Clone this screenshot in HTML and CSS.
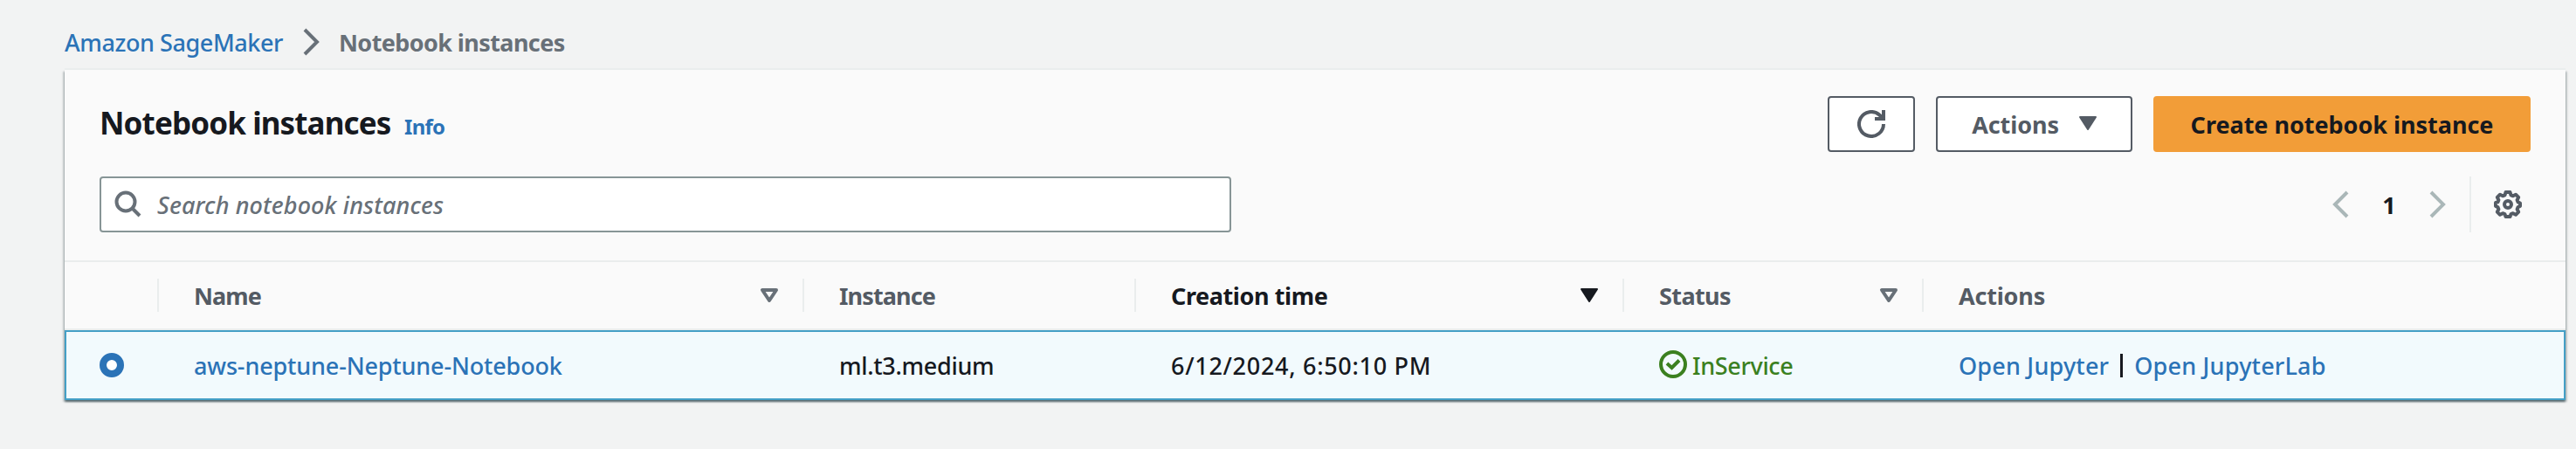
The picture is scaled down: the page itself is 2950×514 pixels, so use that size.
FILE: index.html
```html
<!DOCTYPE html>
<html lang="en">
<head>
<meta charset="utf-8">
<title>Notebook instances</title>
<link rel="stylesheet" href="styles.css">
</head>
<body>
<nav class="breadcrumb">
  <a class="link crumb-root">Amazon SageMaker</a>
  <svg class="crumb-sep" width="20" height="32" viewBox="0 0 20 32"><path d="M2 2l14 14L2 30" fill="none" stroke="#687078" stroke-width="4"/></svg>
  <span class="crumb-current">Notebook instances</span>
</nav>
<main class="card">
  <header class="title-row">
    <h1 class="title">Notebook instances</h1>
    <a class="info">Info</a>
    <div class="buttons">
      <button class="btn refresh" aria-label="Refresh"><svg width="32" height="32" viewBox="0 0 32 32" fill="none" stroke="#545b64" stroke-width="4"><path d="M30 16a14 14 0 1 1-4.500-10.300L29 9"/><path d="M30 0v10H20" /></svg></button>
      <button class="btn actions"><span>Actions</span><svg width="22" height="17" viewBox="0 0 22 17"><path d="M2 1h18L11 15z" fill="#545b64" stroke="#545b64" stroke-width="2" stroke-linejoin="round"/></svg></button>
      <button class="btn primary"><span>Create notebook instance</span></button>
    </div>
  </header>
  <div class="tools">
    <div class="search">
      <svg width="32" height="32" viewBox="0 0 32 32" fill="none" stroke="#687078" stroke-width="4"><circle cx="13" cy="13" r="10.500"/><path d="M20.500 20.500l8.500 8.500"/></svg>
      <span class="placeholder">Search notebook instances</span>
    </div>
    <div class="pager">
      <svg width="20" height="32" viewBox="0 0 20 32"><path d="M18 2L4 16l14 14" fill="none" stroke="#aab7b8" stroke-width="4"/></svg>
      <b class="page">1</b>
      <svg width="20" height="32" viewBox="0 0 20 32"><path d="M2 2l14 14L2 30" fill="none" stroke="#aab7b8" stroke-width="4"/></svg>
      <div class="settings">
        <svg width="32" height="32" viewBox="0 0 32 32" fill="none" stroke="#545b64" stroke-width="4" stroke-linejoin="round"><path d="M13.500 2h5l1 3.300 2.400 1 3.100-1.600 3.200 3.200-1.600 3.100 1 2.400 2.400 1.100v3.500l-2.400 1.100-1 2.400 1.600 3.100-3.200 3.200-3.100-1.600-2.400 1-1 2.800h-5l-1-2.800-2.400-1-3.100 1.600-3.200-3.200 1.600-3.100-1-2.400L2 18v-4l2.400-.6 1-2.400-1.600-3.100L7 4.700l3.100 1.600 2.400-1z"/><circle cx="16" cy="16" r="4"/></svg>
      </div>
    </div>
  </div>
  <div class="grid head">
    <div class="cell"></div>
    <div class="cell"><span class="h-name">Name</span><svg width="22" height="18" viewBox="0 0 22 18"><path d="M3 3h16L11 15z" fill="none" stroke="#687078" stroke-width="4" stroke-linejoin="round"/></svg></div>
    <div class="cell"><span class="h-instance">Instance</span></div>
    <div class="cell sorted"><span class="h-time">Creation time</span><svg width="22" height="18" viewBox="0 0 22 18"><path d="M2 2h18L11 16z" fill="#16191f" stroke="#16191f" stroke-width="2" stroke-linejoin="round"/></svg></div>
    <div class="cell"><span class="h-status">Status</span><svg width="22" height="18" viewBox="0 0 22 18"><path d="M3 3h16L11 15z" fill="none" stroke="#687078" stroke-width="4" stroke-linejoin="round"/></svg></div>
    <div class="cell"><span class="h-actions">Actions</span></div>
  </div>
  <div class="grid row">
    <div class="cell"><span class="radio"></span></div>
    <div class="cell text"><a class="link c-name">aws-neptune-Neptune-Notebook</a></div>
    <div class="cell text"><span class="c-type">ml.t3.medium</span></div>
    <div class="cell text"><span class="c-time">6/12/2024, 6:50:10 PM</span></div>
    <div class="cell text status"><svg width="32" height="32" viewBox="0 0 32 32" fill="none" stroke="#3b801f" stroke-width="4"><circle cx="16" cy="16" r="14"/><path d="M9 15l5.500 5L23 11.500"/></svg><span class="c-status">InService</span></div>
    <div class="cell text open"><a class="link c-open">Open Jupyter</a><i class="bar"></i><a class="link c-open">Open JupyterLab</a></div>
  </div>
</main>
</body>
</html>
```
FILE: styles.css
```css
* { box-sizing: border-box; }
body {
  margin: 0;
  height: 514px;
  background: #f2f3f3;
  color: #16191f;
  font: 500 27px/40px "Noto Sans", "Open Sans", sans-serif;
  white-space: nowrap;
  overflow: hidden;
}
svg { display: block; flex: none; }
.link, .info { color: #2b73b7; }

.breadcrumb { display: flex; align-items: center; height: 78px; padding: 20px 0 0 74px; }
.crumb-root { width: 251px; letter-spacing: -.42px; }
.crumb-sep { margin: -3px 21px 0 22px; }
.crumb-current { color: #687078; font-weight: 700; letter-spacing: -.6px; }

.card {
  width: 2864px;
  height: 378px;
  margin: 2px 0 0 74px;
  background: #fafafa;
  box-shadow: 0 -2px 0 #eaeded, 0 2px 2px rgba(0,28,36,.5), 2px 2px 2px rgba(0,28,36,.15), -2px 2px 2px rgba(0,28,36,.15);
}
.title-row { display: flex; align-items: center; height: 122px; padding: 30px 40px 28px; }
.title { margin: -2px 0 0; font-size: 35px; line-height: 48px; font-weight: 700; letter-spacing: -.88px; width: 333px; }
.info { margin: 5px 0 0 16px; font-size: 24px; font-weight: 700; letter-spacing: -.7px; }
.buttons { display: flex; gap: 24px; margin-left: auto; }
.btn {
  display: flex; align-items: center; justify-content: center;
  height: 64px; padding: 0; border: 2px solid #545b64; border-radius: 4px;
  background: #fff; color: #545b64;
  font: 700 27px/40px "Noto Sans", "Open Sans", sans-serif;
}
.btn span { padding-top: 1px; }
.refresh { width: 100px; }
.actions { width: 225px; gap: 22px; padding-left: 1px; letter-spacing: -.1px; }
.actions svg { margin-top: -2px; }
.primary { width: 432px; border-color: #f29d38; background: #f29d38; color: #16191f; letter-spacing: -.03px; }

.tools { display: flex; justify-content: space-between; height: 96px; padding: 0 40px; }
.search { display: flex; align-items: center; gap: 17px; width: 1296px; height: 64px; padding-left: 15px; border: 2px solid #879596; border-radius: 4px; background: #fff; }
.placeholder { padding-top: 2px; color: #687078; font-style: italic; letter-spacing: .1px; }
.pager { display: flex; align-items: center; height: 64px; }
.page { width: 92px; padding-top: 1px; text-align: center; }
.settings { display: flex; align-items: center; height: 64px; margin-left: 26px; padding: 0 10px 0 26px; border-left: 2px solid #eaeded; }

.grid { display: grid; grid-template-columns: 108px 739px 380px 559px 343px 1fr; height: 80px; }
.head { border-top: 2px solid #eaeded; border-bottom: 2px solid #eaeded; align-items: center; color: #545b64; font-weight: 700; }
.head .cell { display: flex; align-items: center; justify-content: space-between; height: 38px; padding: 0 27px 0 40px; border-right: 2px solid #eaeded; }
.head .cell:last-child { border-right: 0; }
.head span { padding-top: 2px; }
.h-name { letter-spacing: -.9px; }
.h-instance { letter-spacing: -.9px; }
.h-time { letter-spacing: -.4px; }
.h-status { letter-spacing: -.6px; }
.h-actions { letter-spacing: -.2px; }
.sorted { color: #16191f; }
.row { border: 2px solid #449fc6; background: #f2fafd; align-items: center; }
.row .cell { padding-left: 38px; }
.text { padding-top: 2px; }
.radio { display: block; width: 28px; height: 28px; border: 8px solid #2b73b7; border-radius: 50%; background: #fff; }
.c-name { letter-spacing: -.16px; }
.c-type { letter-spacing: -.3px; }
.c-time { letter-spacing: .7px; }
.status { display: flex; align-items: center; gap: 6px; color: #3b801f; }
.status svg { margin-top: -5px; }
.c-status { letter-spacing: -.35px; }
.open { display: flex; align-items: center; }
.c-open { letter-spacing: .2px; }
.bar { width: 3px; height: 27px; margin: -2px 13px 0; background: #16191f; }
```
